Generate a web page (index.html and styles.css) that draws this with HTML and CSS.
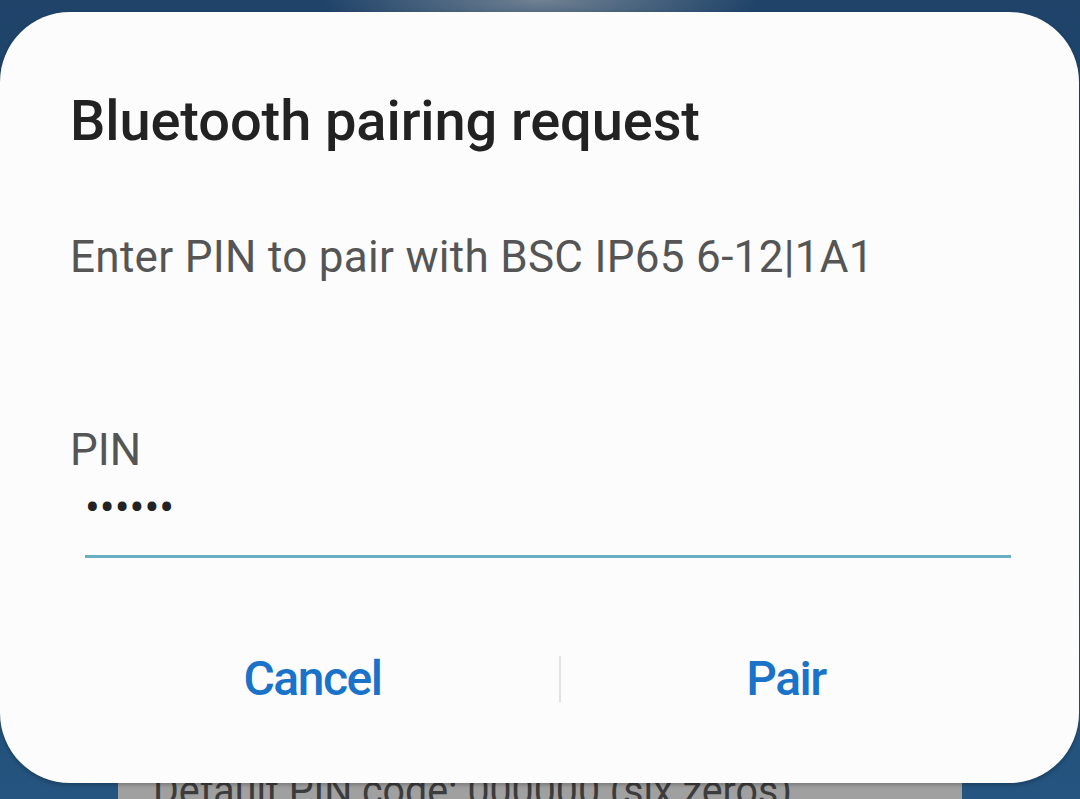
FILE: index.html
```html
<!DOCTYPE html>
<html>
<head>
<meta charset="utf-8">
<link rel="stylesheet" href="styles.css">
</head>
<body>
<div class="screen">
  <div class="behind">
    <div class="hint">Default PIN code: 000000 (six zeros)</div>
  </div>
  <div class="dialog">
    <h1 class="title">Bluetooth pairing request</h1>
    <p class="message">Enter PIN to pair with BSC IP65 6-12|1A1</p>
    <div class="field">
      <div class="label">PIN</div>
      <div class="input">••••••</div>
    </div>
    <div class="actions">
      <button class="btn btn-cancel">Cancel</button>
      <span class="divider"></span>
      <button class="btn btn-pair">Pair</button>
    </div>
  </div>
</div>
</body>
</html>
```
FILE: styles.css
```css
html, body {
  margin: 0;
  padding: 0;
}
body {
  width: 1080px;
  height: 799px;
  overflow: hidden;
  font-family: Roboto, "Noto Sans", sans-serif;
}
.screen {
  position: relative;
  width: 1080px;
  height: 799px;
  overflow: hidden;
  background:
    radial-gradient(ellipse 220px 40px at 540px 0px, rgba(140,150,160,0.75), rgba(140,150,160,0) 100%),
    linear-gradient(#1f4369, #24547f);
  padding-top: 12px;
  box-sizing: border-box;
}
.behind {
  position: absolute;
  left: 118px;
  top: 760px;
  width: 844px;
  height: 60px;
  background: #a0a0a0;
  box-sizing: border-box;
  padding-left: 35px;
}
.hint {
  margin-top: 5px;
  font-family: "Liberation Sans Narrow", Roboto, sans-serif;
  font-size: 43px;
  color: #3c3c3c;
  transform: scaleX(0.915);
  transform-origin: left;
  white-space: nowrap;
}
.dialog {
  position: relative;
  width: 1079px;
  height: 771px;
  background: #fcfcfc;
  border-radius: 70px;
  box-shadow: 0 2px 4px rgba(0,0,0,0.25);
  box-sizing: border-box;
  padding: 79px 68px 0 70px;
  display: flex;
  flex-direction: column;
}
.title {
  margin: 0;
  font-size: 56px;
  font-weight: 500;
  color: #222;
  line-height: 60px;
  letter-spacing: -0.1px;
}
.message {
  margin: 81px 0 0;
  font-size: 44px;
  color: #555;
  line-height: 50px;
  letter-spacing: 0.3px;
}
.field {
  margin-top: 143px;
}
.label {
  font-size: 44px;
  color: #555;
  line-height: 50px;
}
.input {
  margin: 10px 0 0 15px;
  height: 70px;
  border-bottom: 3px solid #6aaec4;
  font-size: 44px;
  color: #222;
  line-height: 46px;
  box-sizing: content-box;
}
.actions {
  margin-top: 96px;
  display: flex;
  align-items: center;
  margin-left: -4px;
  margin-right: -5px;
}
.btn {
  background: none;
  border: 0;
  padding: 0;
  font-family: Roboto, sans-serif;
  font-size: 48px;
  font-weight: 500;
  color: #1a73c9;
  line-height: 50px;
  letter-spacing: -1.5px;
}
.btn-cancel {
  width: 493px;
}
.btn-pair {
  flex: 1;
  padding-right: 5px;
}
.divider {
  width: 2px;
  height: 46px;
  background: #e2e2e2;
}
```
